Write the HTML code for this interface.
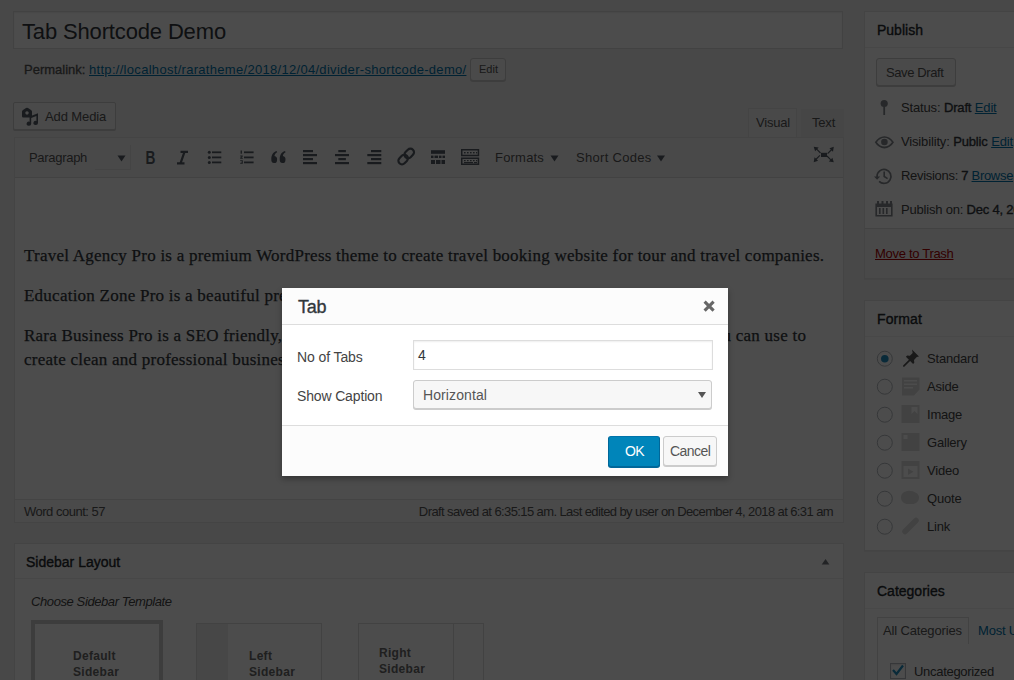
<!DOCTYPE html>
<html><head><meta charset="utf-8">
<style>
*{box-sizing:border-box;margin:0;padding:0}
html,body{width:1014px;height:680px;overflow:hidden;background:#f1f1f1;font-family:"Liberation Sans",sans-serif;font-size:13px;color:#444;position:relative}
.a{position:absolute}
.t{position:absolute;white-space:nowrap;line-height:1}
.box{position:absolute;background:#fff;border:1px solid #e5e5e5;box-shadow:0 1px 1px rgba(0,0,0,.04)}
.btn{position:absolute;background:#f7f7f7;border:1px solid #ccc;border-radius:3px;box-shadow:0 1px 0 #ccc;color:#555}
.lnk{color:#0073aa;text-decoration:underline}
#ov{position:absolute;left:0;top:0;width:1014px;height:680px;background:#000;opacity:.7}
svg.L{position:absolute;left:0;top:0;width:1014px;height:680px}
b{font-weight:normal;-webkit-text-stroke:.35px #32373c;color:#32373c}
</style></head><body>

<!-- ===== Title ===== -->
<div class="a" style="left:13px;top:11px;width:830px;height:38px;background:#fff;border:1px solid #ddd;box-shadow:inset 0 1px 2px rgba(0,0,0,.07)"></div>
<div class="t" style="left:22px;top:21px;font-size:22px;color:#32373c;letter-spacing:-.15px">Tab Shortcode Demo</div>

<!-- ===== Permalink ===== -->
<div class="t" style="left:24px;top:63px;font-size:13px;color:#555;-webkit-text-stroke:.3px #555;letter-spacing:0px">Permalink:</div>
<div class="t lnk" style="left:89px;top:63px;font-size:13px;letter-spacing:.3px">http://localhost/raratheme/2018/12/04/divider-shortcode-demo/</div>
<div class="btn" style="left:470px;top:58px;width:36px;height:23px"></div>
<div class="t" style="left:479px;top:64px;font-size:11px;color:#555">Edit</div>

<!-- ===== Add media ===== -->
<div class="btn" style="left:13px;top:102px;width:103px;height:28px;border-radius:2px"></div>
<div class="t" style="left:45px;top:110px;font-size:13px;color:#555;letter-spacing:-.1px">Add Media</div>

<!-- ===== Visual/Text tabs ===== -->
<div class="a" style="left:748px;top:108px;width:49px;height:30px;background:#f5f5f5;border:1px solid #e5e5e5;border-bottom:0"></div>
<div class="t" style="left:756px;top:116px;font-size:13px;color:#555;letter-spacing:-.2px">Visual</div>
<div class="a" style="left:801px;top:109px;width:43px;height:28px;background:#ebebeb"></div>
<div class="t" style="left:812px;top:116px;font-size:13px;color:#555;letter-spacing:-.2px">Text</div>

<!-- ===== Editor wrap ===== -->
<div class="a" style="left:14px;top:137px;width:830px;height:363px;background:#fff;border:1px solid #e5e5e5"></div>
<div class="a" style="left:15px;top:138px;width:828px;height:40px;background:#f5f5f5;border-bottom:1px solid #dedede"></div>
<div class="a" style="left:95px;top:145px;width:36px;height:25px;border-right:1px solid #e5e5e5;border-bottom:1px solid #e5e5e5"></div>
<div class="t" style="left:29px;top:151px;font-size:13px;color:#555;letter-spacing:-.3px">Paragraph</div>
<div class="t" style="left:495px;top:151px;font-size:13px;color:#555;letter-spacing:.2px">Formats</div>
<div class="t" style="left:576px;top:151px;font-size:13px;color:#555;letter-spacing:.3px">Short Codes</div>

<!-- ===== Content ===== -->
<div class="a" style="left:24px;top:243.5px;width:815px;font-family:'Liberation Serif',serif;font-size:17px;line-height:24px;color:#32373c;letter-spacing:.24px;-webkit-text-stroke:.25px #32373c">
<p style="margin-bottom:16px;white-space:nowrap">Travel Agency Pro is a premium WordPress theme to create travel booking website for tour and travel companies.</p>
<p style="margin-bottom:16px;white-space:nowrap">Education Zone Pro is a beautiful premium WordPress theme for education websites.</p>
<p style="white-space:nowrap">Rara Business Pro is a SEO friendly, responsive and fast loading WordPress business theme that you can use to<br>create clean and professional business websites.</p>
</div>

<!-- ===== Status bar ===== -->
<div class="a" style="left:14px;top:499px;width:830px;height:24px;background:#f7f7f7;border:1px solid #e5e5e5"></div>
<div class="t" style="left:24px;top:505px;font-size:13px;color:#555;letter-spacing:-.5px">Word count: 57</div>
<div class="t" style="right:181px;top:505px;font-size:13px;color:#555;letter-spacing:-.6px">Draft saved at 6:35:15 am. Last edited by user on December 4, 2018 at 6:31 am</div>

<!-- ===== Sidebar layout ===== -->
<div class="box" style="left:14px;top:543px;width:830px;height:160px"></div>
<div class="a" style="left:15px;top:578px;width:828px;height:1px;background:#eee"></div>
<div class="t" style="left:26px;top:555px;font-size:14px;color:#23282d;-webkit-text-stroke:.35px #23282d;letter-spacing:0px">Sidebar Layout</div>
<div class="t" style="left:31px;top:595px;font-size:13px;font-style:italic;color:#444;letter-spacing:-.4px">Choose Sidebar Template</div>
<div class="a" style="left:31px;top:620px;width:132px;height:80px;background:#fff;border:4px solid #ccc"></div>
<div class="t" style="left:73px;top:648px;font-size:12px;font-weight:bold;color:#6a6a6a;line-height:16px;letter-spacing:.3px">Default<br>Sidebar</div>
<div class="a" style="left:196px;top:623px;width:126px;height:80px;background:#fff;border:1px solid #ddd"></div>
<div class="a" style="left:197px;top:624px;width:31px;height:80px;background:#eee"></div>
<div class="t" style="left:249px;top:648px;font-size:12px;font-weight:bold;color:#6a6a6a;line-height:16px;letter-spacing:.3px">Left<br>Sidebar</div>
<div class="a" style="left:358px;top:623px;width:126px;height:80px;background:#fff;border:1px solid #ddd"></div>
<div class="a" style="left:453px;top:624px;width:1px;height:80px;background:#ddd"></div>
<div class="t" style="left:379px;top:645px;font-size:12px;font-weight:bold;color:#6a6a6a;line-height:16px;letter-spacing:.3px">Right<br>Sidebar</div>

<!-- ===== Publish ===== -->
<div class="box" style="left:864px;top:11px;width:200px;height:268px"></div>
<div class="a" style="left:865px;top:47px;width:200px;height:1px;background:#eee"></div>
<div class="t" style="left:877px;top:23px;font-size:14px;color:#23282d;-webkit-text-stroke:.35px #23282d;letter-spacing:0px">Publish</div>
<div class="btn" style="left:876px;top:58px;width:80px;height:28px"></div>
<div class="t" style="left:886px;top:66px;font-size:13px;color:#555;letter-spacing:-.4px">Save Draft</div>
<div class="t" style="left:901px;top:101px;font-size:13px;color:#444;letter-spacing:-.15px">Status: <b>Draft</b> <span class="lnk">Edit</span></div>
<div class="t" style="left:901px;top:135px;font-size:13px;color:#444;letter-spacing:-.15px">Visibility: <b>Public</b> <span class="lnk">Edit</span></div>
<div class="t" style="left:901px;top:168.5px;font-size:13px;color:#444;letter-spacing:-.3px">Revisions: <b>7</b> <span class="lnk">Browse</span></div>
<div class="t" style="left:901px;top:202.5px;font-size:13px;color:#444;letter-spacing:-.2px">Publish on: <b>Dec 4, 2018</b></div>
<div class="a" style="left:865px;top:228px;width:200px;height:50px;background:#f5f5f5;border-top:1px solid #ddd"></div>
<div class="t" style="left:875px;top:247px;font-size:13px;color:#a00;text-decoration:underline;letter-spacing:-.3px">Move to Trash</div>

<!-- ===== Format ===== -->
<div class="box" style="left:864px;top:300px;width:200px;height:251px"></div>
<div class="a" style="left:865px;top:336px;width:200px;height:1px;background:#f0f0f0"></div>
<div class="t" style="left:877px;top:312px;font-size:14px;color:#23282d;-webkit-text-stroke:.35px #23282d;letter-spacing:.1px">Format</div>
<div class="t" style="left:927px;top:345px;font-size:13px;color:#444;line-height:28px;letter-spacing:-.2px">Standard<br>Aside<br>Image<br>Gallery<br>Video<br>Quote<br>Link</div>

<!-- ===== Categories ===== -->
<div class="box" style="left:864px;top:572px;width:200px;height:150px"></div>
<div class="a" style="left:865px;top:608px;width:200px;height:1px;background:#f0f0f0"></div>
<div class="t" style="left:877px;top:584px;font-size:14px;color:#23282d;-webkit-text-stroke:.35px #23282d;letter-spacing:0px">Categories</div>
<div class="a" style="left:877px;top:617px;width:92px;height:28px;background:#fff;border:1px solid #ddd;border-bottom:0"></div>
<div class="a" style="left:969px;top:644px;width:60px;height:1px;background:#ddd"></div>
<div class="a" style="left:877px;top:644px;width:150px;height:40px;background:#fff;border:1px solid #ddd;border-top:0"></div>
<div class="t" style="left:883px;top:624px;font-size:13px;color:#555;letter-spacing:-.15px">All Categories</div>
<div class="t lnk" style="left:978px;top:624px;font-size:13px;text-decoration:none;letter-spacing:-.2px">Most Used</div>
<div class="a" style="left:890px;top:663px;width:16px;height:16px;background:#fff;border:1px solid #b4b9be;box-shadow:inset 0 1px 2px rgba(0,0,0,.1)"></div>
<div class="t" style="left:914px;top:665px;font-size:13px;color:#444;letter-spacing:-.3px">Uncategorized</div>

<!-- ===== Icon layer ===== -->
<svg class="L" viewBox="0 0 1014 680">
 <g fill="#555d66" stroke="none">
  <!-- add media -->
  <path fill-rule="evenodd" d="M22,111.5 q0,-1 1,-1.6 l3,-1.9 q1,-0.5 2,0 l3,1.9 q1,0.6 1,1.6 v4.8 q0,1.2 -1.2,1.2 h-7.6 q-1.2,0 -1.2,-1.2z M27,111.2 a1.7,1.7 0 1 0 0.01,0z" fill="#555d66"/>
  <path d="M29.6,116.5 l8.4,-3.2 v9.6 a2.3,2.1 0 1 1 -1.6,-2 v-4.8 l-5.2,2 v5.6 a2.3,2.1 0 1 1 -1.6,-2z" fill="#555d66"/>
  <!-- paragraph arrow -->
  <path d="M117.5,155.5 h8 l-4,6z"/>
  <path d="M550.5,155.5 h8 l-4,6z"/>
  <path d="M657,155.5 h8 l-4,6z"/>
  <!-- bullet list -->
  <circle cx="209.3" cy="152.3" r="1.5"/><circle cx="209.3" cy="157.4" r="1.5"/><circle cx="209.3" cy="162.4" r="1.5"/>
  <rect x="212" y="151.4" width="9.3" height="1.8"/><rect x="212" y="156.5" width="9.3" height="1.8"/><rect x="212" y="161.5" width="9.3" height="1.8"/>
  <!-- numbered list -->
  <rect x="240.6" y="150.5" width="1.3" height="3.2"/><path d="M240.2,155.6 h2.5 v1 l-1.3,1.2 h1.4 v0.9 h-2.6 v-0.9 l1.4,-1.3 h-1.4z"/><path d="M240.2,160.3 h2.6 v3.5 h-2.6 v-0.8 h1.7 v-0.6 h-1.2 v-0.7 h1.2 v-0.6 h-1.7z"/>
  <rect x="244" y="151.4" width="9.6" height="1.8"/><rect x="244" y="156.5" width="9.6" height="1.8"/><rect x="244" y="161.5" width="9.6" height="1.8"/>
  <!-- align left -->
  <rect x="303" y="150" width="10" height="2.2"/><rect x="303" y="154" width="14" height="2.2"/><rect x="303" y="158" width="10" height="2.2"/><rect x="303" y="162" width="14" height="2.2"/>
  <!-- align center -->
  <rect x="338.3" y="150" width="7.6" height="2.2"/><rect x="335" y="154" width="14" height="2.2"/><rect x="338.3" y="158" width="7.6" height="2.2"/><rect x="335" y="162" width="14" height="2.2"/>
  <!-- align right -->
  <rect x="371" y="150" width="10.3" height="2.2"/><rect x="367.3" y="154" width="14" height="2.2"/><rect x="371" y="158" width="10.3" height="2.2"/><rect x="367.3" y="162" width="14" height="2.2"/>
  <!-- read more -->
  <rect x="431" y="150.2" width="14" height="3.6"/>
  <rect x="431" y="155.6" width="2.5" height="2.4"/><rect x="434.5" y="155.6" width="3.5" height="2.4"/><rect x="439" y="155.6" width="2.5" height="2.4"/><rect x="442.5" y="155.6" width="2.5" height="2.4"/>
  <rect x="431" y="160" width="4" height="4"/><rect x="436" y="160" width="4.5" height="4"/><rect x="441.5" y="160" width="3.5" height="4"/>
  <!-- toolbar toggle -->
  <path fill-rule="evenodd" d="M461,149 h18.2 v7.3 h-18.2z M462.5,150.5 v4.3 h15.2 v-4.3z M461,157.6 h18.2 v7.4 h-18.2z M462.5,159.1 v4.4 h15.2 v-4.4z"/>
  <rect x="464" y="152" width="1.6" height="1.4"/><rect x="467" y="152" width="1.6" height="1.4"/><rect x="470" y="152" width="1.6" height="1.4"/><rect x="473" y="152" width="1.6" height="1.4"/><rect x="476" y="152" width="1.2" height="1.4"/>
  <rect x="464" y="160" width="1.6" height="1.2"/><rect x="467" y="160" width="1.6" height="1.2"/><rect x="470" y="160" width="1.6" height="1.2"/><rect x="473" y="160" width="1.6" height="1.2"/><rect x="476" y="160" width="1.2" height="1.2"/>
  <rect x="464" y="162" width="9" height="1.2"/><rect x="474" y="162" width="3" height="1.2"/>
  <!-- fullscreen -->
  <rect x="821" y="152.8" width="6" height="4.2"/>
  <path d="M813.7,146.8 l5,0.8 -1.4,1.4 3.6,3.6 -0.8,0.8 -3.6,-3.6 -1.4,1.4z"/>
  <path d="M833.8,146.8 l-0.8,5 -1.4,-1.4 -3.6,3.6 -0.8,-0.8 3.6,-3.6 -1.4,-1.4z"/>
  <path d="M813.7,162.2 l0.8,-5 1.4,1.4 3.6,-3.6 0.8,0.8 -3.6,3.6 1.4,1.4z"/>
  <path d="M833.8,162.2 l-5,-0.8 1.4,-1.4 -3.6,-3.6 0.8,-0.8 3.6,3.6 1.4,-1.4z"/>
  <!-- sidebar toggle arrow -->
  <path d="M821.7,564.5 l3.85,-5.5 3.85,5.5z" fill="#72777c"/>
 </g>
 <g fill="none" stroke="#555d66">
  <!-- italic -->
  <path d="M180.5,151.8 h7.5 M184.5,151.8 l-4,11.6 M177,163.4 h7.5" stroke-width="2.2"/>
  <!-- link -->
  <g transform="rotate(-45 406.2 156.5)" stroke-width="2.2">
   <rect x="396.65" y="152.9" width="10.5" height="7.2" rx="3.6"/>
   <rect x="405.25" y="152.9" width="10.5" height="7.2" rx="3.6"/>
  </g>
 </g>
 <!-- bold / quote -->
 <text x="145.5" y="164.5" font-family="Liberation Sans" font-weight="bold" font-size="19" fill="#555d66" transform="translate(145.5 0) scale(0.72 1) translate(-145.5 0)">B</text>
 <g fill="#555d66">
  <path d="M271.3,159.3 c0,-4.3 1.6,-7.2 5.3,-8.4 l0.6,1.3 c-1.9,1 -2.6,2.4 -2.7,3.9 a2.9,3.5 0 1 1 -3.2,3.2z"/>
  <path d="M279.7,159.3 c0,-4.3 1.6,-7.2 5.3,-8.4 l0.6,1.3 c-1.9,1 -2.6,2.4 -2.7,3.9 a2.9,3.5 0 1 1 -3.2,3.2z"/>
 </g>
 <!-- publish icons -->
 <g fill="#82878c">
  <circle cx="884.2" cy="103.5" r="3.6"/><rect x="883.3" y="105" width="1.8" height="10"/>
  <path d="M874.8,142.2 c2.5,-4 6,-6 9.6,-6 s7.1,2 9.6,6 c-2.5,4 -6,6.2 -9.6,6.2 s-7.1,-2.2 -9.6,-6.2z M876.9,142.2 c2,2.8 4.6,4.4 7.5,4.4 s5.5,-1.6 7.5,-4.4 c-2,-2.8 -4.6,-4.4 -7.5,-4.4 s-5.5,1.6 -7.5,4.4z" fill-rule="evenodd"/>
  <circle cx="884.4" cy="142" r="3.3"/>
  <path d="M876.2,176.4 a7.8,7.8 0 1 1 2.3,5.5 l1.2,-1.2 a6.1,6.1 0 1 0 -1.8,-4.3 h2.3 l-3.1,3.4 -3.1,-3.4z"/>
  <path d="M883.4,171.5 h1.6 v4.6 l3,1.8 -0.8,1.3 -3.8,-2.3z"/>
  <path fill-rule="evenodd" d="M875.4,203.5 h17.2 v13 h-17.2z M877,207 v8 h14 v-8z"/>
  <rect x="877" y="201" width="2" height="3"/><rect x="881.5" y="201" width="2" height="3"/><rect x="886" y="201" width="2" height="3"/><rect x="890" y="201" width="2" height="3"/>
  <rect x="879" y="208" width="1.6" height="6"/><rect x="882.5" y="208" width="1.6" height="6"/><rect x="886" y="208" width="1.6" height="6"/>
 </g>
 <!-- format radios -->
 <g fill="#fff" stroke="#b4b9be" stroke-width="1">
  <circle cx="884.8" cy="358.7" r="7.5"/><circle cx="884.8" cy="386.7" r="7.5"/><circle cx="884.8" cy="414.7" r="7.5"/><circle cx="884.8" cy="442.7" r="7.5"/><circle cx="884.8" cy="470.7" r="7.5"/><circle cx="884.8" cy="498.7" r="7.5"/><circle cx="884.8" cy="526.7" r="7.5"/>
 </g>
 <circle cx="884.8" cy="358.7" r="3.8" fill="#1e8cbe"/>
 <!-- format icons -->
 <path d="M912,349.5 l7,7 -2.2,0.6 -2.8,2.8 0.3,2.8 -1.2,1.2 -3,-3 -5.8,5.8 -1.2,0 0,-1.2 5.8,-5.8 -3,-3 1.2,-1.2 2.8,0.3 2.8,-2.8z" fill="#555"/>
 <g fill="#ddd">
  <path fill-rule="evenodd" d="M902,377.5 h17.5 v12 l-5.5,6 h-12z M904,380 h13 v1.6 h-13z M904,383.5 h13 v1.6 h-13z M904,387 h9 v1.6 h-9z"/>
  <path fill-rule="evenodd" d="M901.5,405 h18 v18 h-18z M903.5,407 h8 v7 l3,-3 3,3 v-7 h-14z"/>
  <path fill-rule="evenodd" d="M901.5,433 h18 v18 h-18z M903.5,435 h4 v4 h-4z"/>
  <path fill-rule="evenodd" d="M901.5,461 h18 v18 h-18z M903.5,466 v11 h14 v-11z M908,468.5 v6.5 l5.5,-3.25z"/>
  <path d="M901,497.5 c0,-4 3,-6.5 8,-6.8 c5,0.3 10,2.5 10,6.8 c0,4 -3,6.5 -7,6.5 h-4 c-4,0 -7,-2.5 -7,-6.5z"/>
 </g>
 <path d="M905,531.5 l11,-11" fill="none" stroke="#ddd" stroke-width="5.5" stroke-linecap="round"/>
 <!-- checkbox tick -->
 <path d="M893,670 l3.5,4 6.5,-8.5" fill="none" stroke="#1e8cbe" stroke-width="2.2"/>
</svg>

<div id="ov"></div>

<!-- ===== Modal ===== -->
<div class="a" style="left:282px;top:288px;width:446px;height:188px;background:#fff;box-shadow:0 3px 6px rgba(0,0,0,.3)">
  <div class="a" style="left:0;top:0;width:446px;height:37px;background:#fcfcfc;border-bottom:1px solid #ddd"></div>
  <div class="t" style="left:16px;top:10px;font-size:18px;font-weight:normal;color:#32373c;-webkit-text-stroke:.35px #32373c;letter-spacing:-.2px">Tab</div>
  <svg class="a" style="left:421px;top:12px" width="12" height="12" viewBox="0 0 12 12"><path d="M1.6,1.6 L10.6,10.6 M10.6,1.6 L1.6,10.6" stroke="#666" stroke-width="3.1"/></svg>
  <div class="t" style="left:15px;top:61.5px;font-size:14px;color:#444;letter-spacing:-.1px">No of Tabs</div>
  <div class="a" style="left:131px;top:52px;width:300px;height:30px;border:1px solid #ddd;box-shadow:inset 0 1px 2px rgba(0,0,0,.07);background:#fff"></div>
  <div class="t" style="left:136px;top:60px;font-size:14px;color:#32373c">4</div>
  <div class="t" style="left:15px;top:101px;font-size:14px;color:#444;letter-spacing:-.15px">Show Caption</div>
  <div class="a" style="left:131px;top:92px;width:299px;height:29px;border:1px solid #ccc;border-radius:3px;box-shadow:0 1px 0 #ccc;background:#f7f7f7"></div>
  <div class="t" style="left:141px;top:100px;font-size:14px;color:#555;letter-spacing:.1px">Horizontal</div>
  <svg class="a" style="left:416px;top:104px" width="8" height="6" viewBox="0 0 8 6"><path d="M0,0 h8 l-4,6z" fill="#555"/></svg>
  <div class="a" style="left:0;top:137px;width:446px;height:51px;background:#fcfcfc;border-top:1px solid #ddd"></div>
  <div class="a" style="left:326px;top:148px;width:52px;height:31px;background:#0085ba;border:1px solid #0073aa;border-color:#0073aa #006799 #006799;border-radius:3px;box-shadow:0 1px 0 #006799"></div>
  <div class="t" style="left:343px;top:156px;font-size:14px;color:#fff;letter-spacing:-.6px">OK</div>
  <div class="btn" style="left:381px;top:148px;width:54px;height:30px"></div>
  <div class="t" style="left:388px;top:156px;font-size:14px;color:#555;letter-spacing:-.55px">Cancel</div>
</div>
</body></html>
